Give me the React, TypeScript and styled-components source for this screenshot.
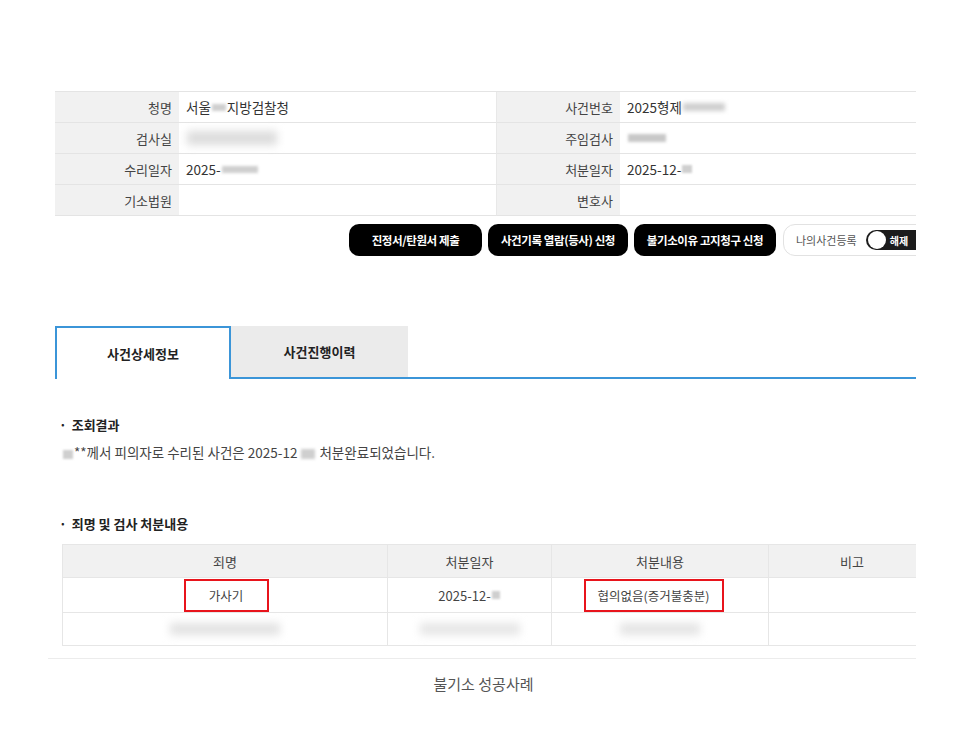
import React from "react";
import styled, { createGlobalStyle } from "styled-components";

const Global = createGlobalStyle`
  html, body { margin: 0; padding: 0; background: #fff; }
  body { font-family: "Noto Sans CJK KR", "Noto Sans", sans-serif; color: #333; }
`;

const Frame = styled.div`
  margin-left: 48px;
  width: 868px;
  overflow: hidden;
  padding-top: 91px;
`;

const Inner = styled.div`
  margin-left: 7px;
  width: 880px;
`;

const InfoGrid = styled.div`
  display: grid;
  grid-template-columns: 124px 318px 123px 1fr;
  border-top: 1px solid #e4e4e4;
`;

const Label = styled.div`
  height: 30px;
  background: #f1f1f1;
  border-bottom: 1px solid #e4e4e4;
  display: flex;
  align-items: center;
  justify-content: flex-end;
  padding-right: 7px;
  font-size: 13px;
  color: #444;
`;

const Value = styled.div<{ $divider?: boolean }>`
  height: 30px;
  background: #fff;
  border-bottom: 1px solid #e4e4e4;
  ${(p) => (p.$divider ? "border-right: 1px solid #e8e8e8;" : "")}
  display: flex;
  align-items: center;
  padding-left: 7px;
  font-size: 13.5px;
  color: #333;
`;

const Redact = styled.span<{ $w: number; $h?: number; $c?: string; $blur?: number }>`
  display: inline-block;
  width: ${(p) => p.$w}px;
  height: ${(p) => p.$h ?? 8}px;
  background: ${(p) => p.$c ?? "#cfcfcf"};
  filter: blur(${(p) => p.$blur ?? 1.5}px);
  vertical-align: middle;
  margin: 0 1px;
`;

const ButtonRow = styled.div`
  display: flex;
  justify-content: flex-end;
  gap: 6px;
  margin-top: 8px;
`;

const BlackButton = styled.button<{ $w: number }>`
  width: ${(p) => p.$w}px;
  flex-shrink: 0;
  height: 32px;
  background: #000;
  color: #fff;
  border: none;
  border-radius: 10px;
  font-family: "Noto Sans CJK KR", sans-serif;
  font-size: 11.5px;
  font-weight: 700;
  letter-spacing: -0.4px;
  padding: 0;
  white-space: nowrap;
`;

const ToggleBox = styled.div`
  width: 152px;
  flex-shrink: 0;
  height: 32px;
  box-sizing: border-box;
  border: 1px solid #e2e2e2;
  border-radius: 12px;
  display: flex;
  align-items: center;
  padding-left: 12px;
  gap: 9px;
  font-size: 11px;
  color: #555;
  white-space: nowrap;
  margin-left: 1px;
`;

const Switch = styled.div`
  width: 66px;
  flex-shrink: 0;
  height: 20px;
  background: #1c1c1c;
  border-radius: 10px;
  display: flex;
  align-items: center;
  padding-left: 2px;
  gap: 4px;
  color: #fff;
  font-size: 10px;
  font-weight: 700;
`;

const Knob = styled.span`
  width: 18px;
  height: 18px;
  border-radius: 50%;
  background: #fff;
`;

const Tabs = styled.div`
  display: flex;
  margin-top: 70px;
  height: 53px;
`;

const Tab = styled.div<{ $active?: boolean }>`
  width: 176px;
  box-sizing: border-box;
  display: flex;
  align-items: center;
  justify-content: center;
  font-size: 13px;
  font-weight: 700;
  color: #222;
  ${(p) =>
    p.$active
      ? "background:#fff; border:2px solid #3b95d8; border-bottom:none;"
      : "background:#ebebeb; border-bottom:2px solid #3b95d8; width:177px;"}
`;

const TabRest = styled.div`
  flex: 1;
  border-bottom: 2px solid #3b95d8;
`;

const SectionTitle = styled.div<{ $mt: number }>`
  margin-top: ${(p) => p.$mt}px;
  margin-left: 4px;
  font-size: 13px;
  font-weight: 700;
  line-height: 20px;
  color: #222;
  &::before {
    content: "·";
    margin-right: 5px;
  }
`;

const ResultText = styled.div`
  margin-top: 7px;
  margin-left: 7px;
  font-size: 13.5px;
  line-height: 20px;
  color: #444;
`;

const Table = styled.div`
  margin-top: 10px;
  margin-left: 14px;
  display: grid;
  grid-template-columns: 325px 164px 217px 167px;
  border-left: 1px solid #e6e6e6;
  border-top: 1px solid #e6e6e6;
`;

const Cell = styled.div<{ $head?: boolean; $h: number }>`
  height: ${(p) => p.$h}px;
  box-sizing: border-box;
  border-right: 1px solid #e6e6e6;
  border-bottom: 1px solid #e6e6e6;
  background: ${(p) => (p.$head ? "#f1f1f1" : "#fff")};
  display: flex;
  align-items: center;
  justify-content: center;
  font-size: 13px;
  color: #444;
`;

const Highlight = styled.div<{ $w: number; $shift?: number }>`
  width: ${(p) => p.$w}px;
  height: 33px;
  box-sizing: border-box;
  border: 2px solid #e8141c;
  display: flex;
  align-items: center;
  justify-content: center;
  font-size: 12.5px;
  color: #444;
  margin-left: ${(p) => p.$shift ?? 0}px;
`;

const BottomLine = styled.div`
  margin-top: 12px;
  border-top: 1px solid #ececec;
`;

const Caption = styled.div`
  margin-top: 15px;
  padding-right: 11px;
  text-align: center;
  font-size: 15px;
  line-height: 20px;
  color: #555;
`;

export default function App() {
  return (
    <>
      <Global />
      <Frame>
        <Inner>
          <InfoGrid>
            <Label>청명</Label>
            <Value $divider>
              서울<Redact $w={14} $h={7} />
              지방검찰청
            </Value>
            <Label>사건번호</Label>
            <Value>
              2025형제<Redact $w={42} $h={8} $blur={2} />
            </Value>
            <Label>검사실</Label>
            <Value $divider>
              <Redact $w={90} $h={14} $c="#dcdcdc" $blur={4} />
            </Value>
            <Label>주임검사</Label>
            <Value>
              <Redact $w={38} $h={8} $c="#c8c8c8" $blur={1.5} />
            </Value>
            <Label>수리일자</Label>
            <Value $divider>
              2025-<Redact $w={36} $h={7} $blur={1.5} />
            </Value>
            <Label>처분일자</Label>
            <Value>
              2025-12-<Redact $w={10} $h={8} $blur={1.2} />
            </Value>
            <Label>기소법원</Label>
            <Value $divider />
            <Label>변호사</Label>
            <Value />
          </InfoGrid>

          <ButtonRow>
            <BlackButton $w={133}>진정서/탄원서 제출</BlackButton>
            <BlackButton $w={140}>사건기록 열람(등사) 신청</BlackButton>
            <BlackButton $w={142}>불기소이유 고지청구 신청</BlackButton>
            <ToggleBox>
              나의사건등록
              <Switch>
                <Knob />
                해제
              </Switch>
            </ToggleBox>
          </ButtonRow>

          <Tabs>
            <Tab $active>사건상세정보</Tab>
            <Tab>사건진행이력</Tab>
            <TabRest />
          </Tabs>

          <SectionTitle $mt={36}>조회결과</SectionTitle>
          <ResultText>
            <Redact $w={10} $h={9} $blur={1} />
            **께서 피의자로 수리된 사건은 2025-12 <Redact $w={14} $h={10} $blur={1.5} /> 처분완료되었습니다.
          </ResultText>

          <SectionTitle $mt={52}>죄명 및 검사 처분내용</SectionTitle>
        </Inner>
        <Table>
          <Cell $head $h={33}>죄명</Cell>
          <Cell $head $h={33}>처분일자</Cell>
          <Cell $head $h={33}>처분내용</Cell>
          <Cell $head $h={33}>비고</Cell>
          <Cell $h={35}>
            <Highlight $w={85} $shift={2}>가사기</Highlight>
          </Cell>
          <Cell $h={35}>
            2025-12-<Redact $w={8} $h={8} $blur={1} />
          </Cell>
          <Cell $h={35}>
            <Highlight $w={140} $shift={-13}>협의없음(증거불충분)</Highlight>
          </Cell>
          <Cell $h={35} />
          <Cell $h={33}>
            <Redact $w={110} $h={12} $c="#e2e2e2" $blur={4} />
          </Cell>
          <Cell $h={33}>
            <Redact $w={100} $h={12} $c="#e6e6e6" $blur={4} />
          </Cell>
          <Cell $h={33}>
            <Redact $w={80} $h={12} $c="#e4e4e4" $blur={4} />
          </Cell>
          <Cell $h={33} />
        </Table>
        <BottomLine />
      </Frame>
      <Caption>불기소 성공사례</Caption>
    </>
  );
}
